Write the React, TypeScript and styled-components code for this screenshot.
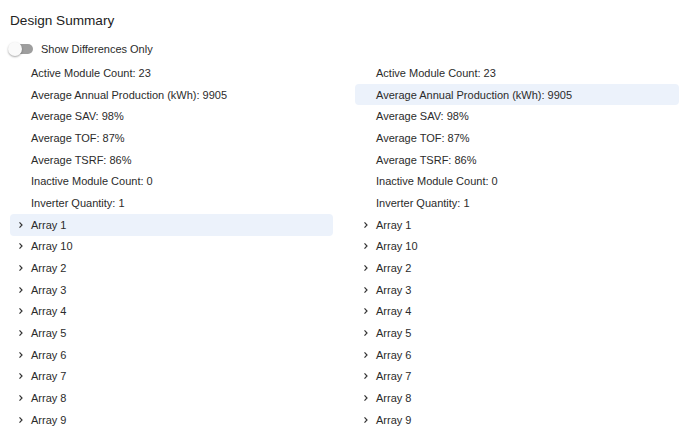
import React from "react";
import styled, { createGlobalStyle } from "styled-components";

const Global = createGlobalStyle`
  html, body { margin: 0; padding: 0; background: #fff; }
  body { font-family: "Liberation Sans", Arial, sans-serif; color: #2b2b2b; }
`;

const Page = styled.div`
  padding: 11px 9px 0 10px;
`;

const Title = styled.h1`
  margin: 0;
  font-size: 13.6px;
  line-height: 20px;
  font-weight: 400;
  color: #222;
`;

const ToggleRow = styled.label`
  display: flex;
  align-items: center;
  height: 24px;
  margin-top: 6px;
  gap: 7px;
  margin-left: -2px;
  font-size: 11px;
  color: #2b2b2b;
`;

const Switch = styled.span`
  position: relative;
  width: 26px;
  height: 14px;
  display: inline-block;
`;

const Track = styled.span`
  position: absolute;
  left: 4px;
  top: 2px;
  width: 21px;
  height: 10px;
  border-radius: 5px;
  background: #9e9e9e;
`;

const Knob = styled.span`
  position: absolute;
  left: 0;
  top: 0;
  width: 14px;
  height: 14px;
  border-radius: 50%;
  background: #fafafa;
  box-shadow: 0 1px 2px rgba(0, 0, 0, 0.35);
`;

const Columns = styled.div`
  display: grid;
  grid-template-columns: 323px 324px;
  column-gap: 22px;
  margin-top: 1px;
`;

const Column = styled.div`
  display: flex;
  flex-direction: column;
`;

const Row = styled.div<{ $active?: boolean }>`
  display: flex;
  align-items: center;
  height: 21.7px;
  padding-left: 8px;
  border-radius: 4px;
  font-size: 11px;
  color: #2b2b2b;
  background: ${(p) => (p.$active ? "#ecf2fb" : "transparent")};
`;

const Chevron = styled.span<{ $hidden?: boolean }>`
  width: 13px;
  display: inline-flex;
  align-items: center;
  justify-content: flex-start;
  visibility: ${(p) => (p.$hidden ? "hidden" : "visible")};
`;

const ChevronIcon = () => (
  <svg width="6" height="8" viewBox="0 0 6 8">
    <path d="M1.5 1.4 L4 4 L1.5 6.6" fill="none" stroke="#333" strokeWidth="1.2" />
  </svg>
);

const props = [
  "Active Module Count: 23",
  "Average Annual Production (kWh): 9905",
  "Average SAV: 98%",
  "Average TOF: 87%",
  "Average TSRF: 86%",
  "Inactive Module Count: 0",
  "Inverter Quantity: 1",
];
const arrays = ["Array 1", "Array 10", "Array 2", "Array 3", "Array 4", "Array 5", "Array 6", "Array 7", "Array 8", "Array 9"];

const SummaryColumn: React.FC<{ activeProp?: number; activeArray?: number }> = ({ activeProp, activeArray }) => (
  <Column>
    {props.map((p, i) => (
      <Row key={p} $active={i === activeProp}>
        <Chevron $hidden />
        {p}
      </Row>
    ))}
    {arrays.map((a, i) => (
      <Row key={a} $active={i === activeArray}>
        <Chevron>
          <ChevronIcon />
        </Chevron>
        {a}
      </Row>
    ))}
  </Column>
);

export default function App() {
  return (
    <>
      <Global />
      <Page>
        <Title>Design Summary</Title>
        <ToggleRow>
          <Switch>
            <Track />
            <Knob />
          </Switch>
          Show Differences Only
        </ToggleRow>
        <Columns>
          <SummaryColumn activeArray={0} />
          <SummaryColumn activeProp={1} />
        </Columns>
      </Page>
    </>
  );
}
